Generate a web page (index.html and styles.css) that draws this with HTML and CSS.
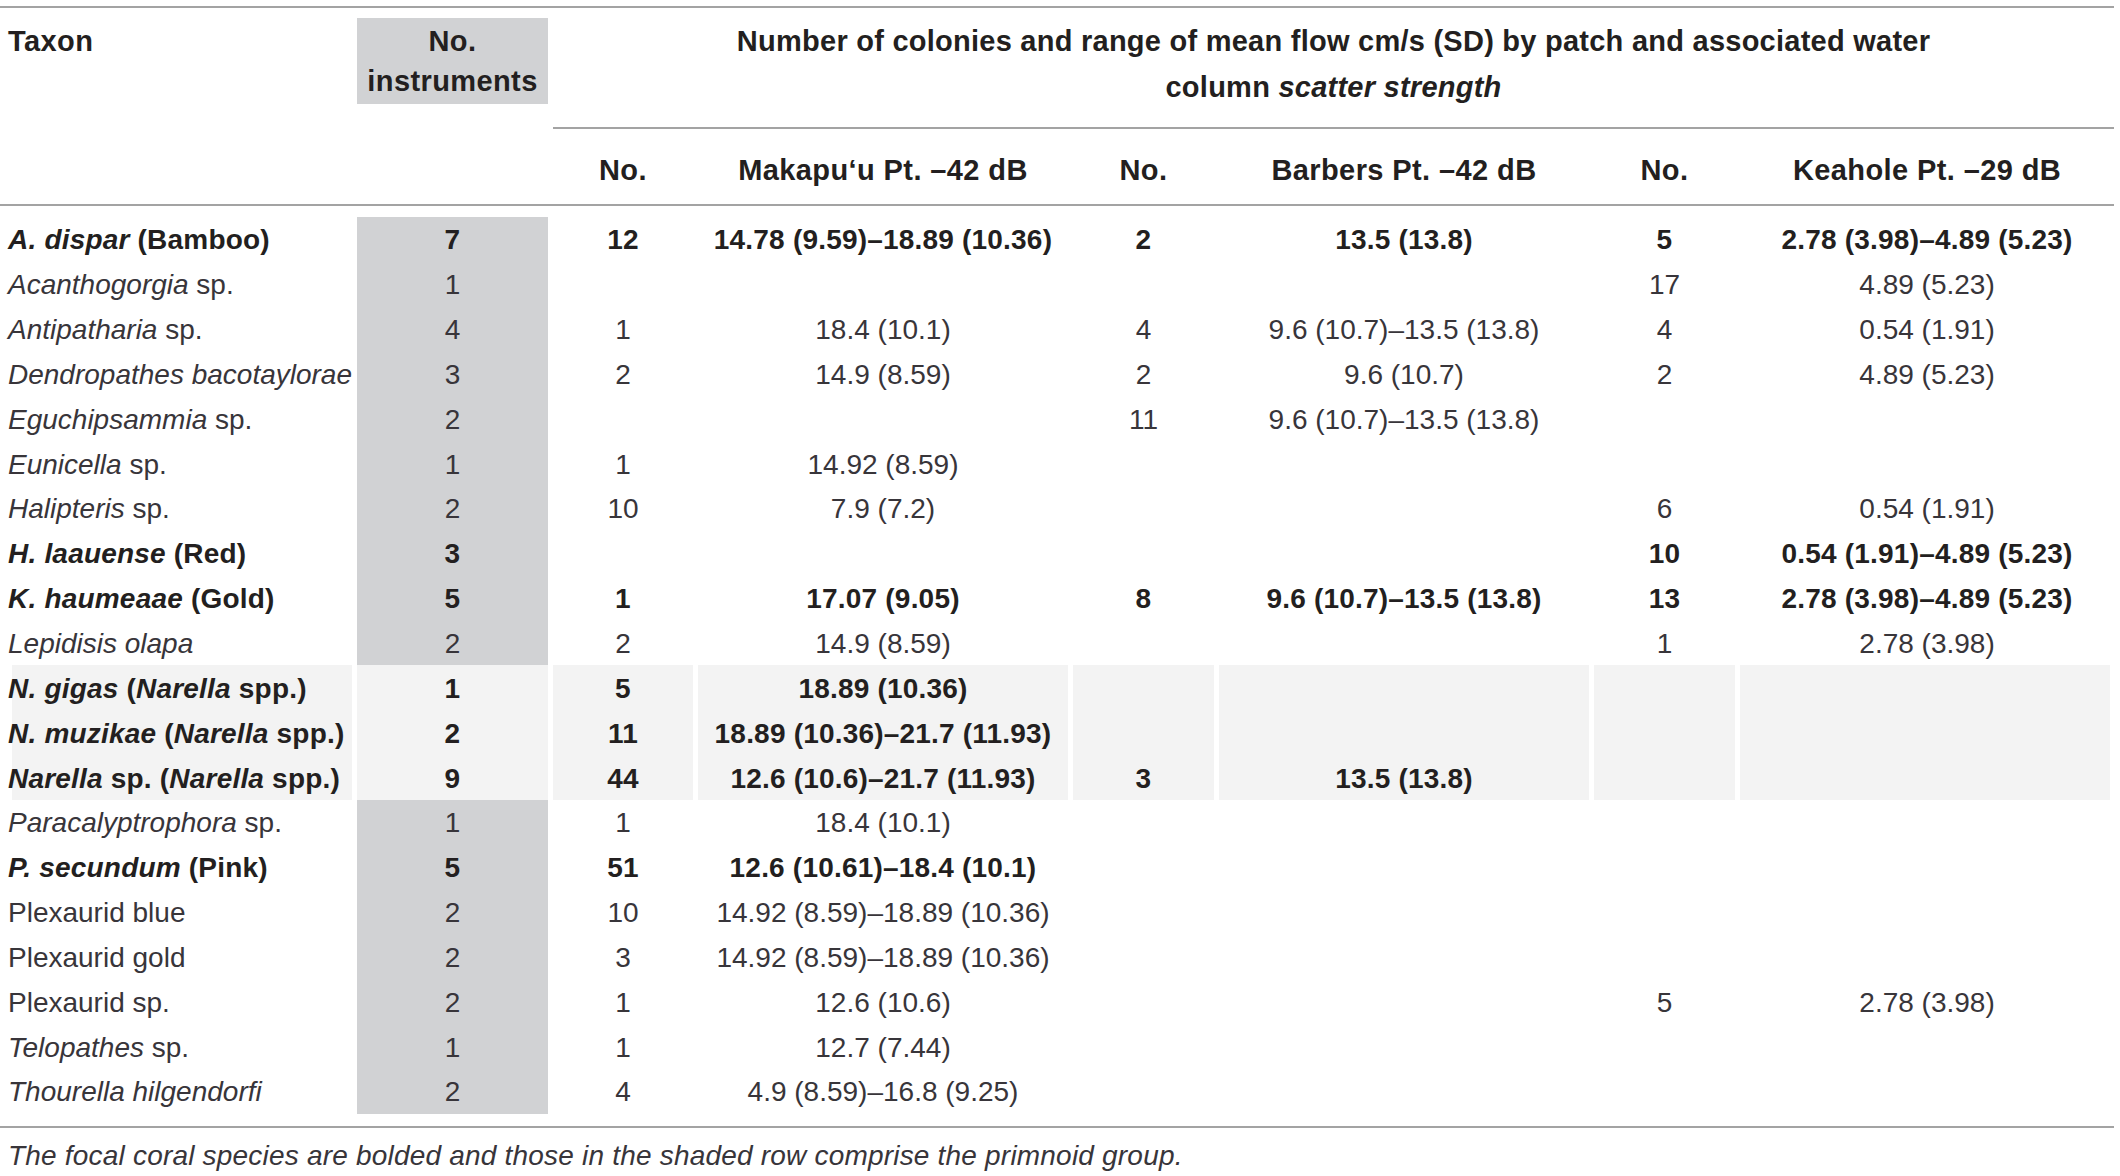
FILE: index.html
```html
<!DOCTYPE html>
<html lang="en">
<head>
	<meta charset="UTF-8">
	<title>Colonies and mean flow by patch</title>
	<link rel="stylesheet" href="styles.css">
</head>
<body>
	<table class="flow">
		<colgroup>
			<col class="c-taxon"><col class="c-inst"><col class="c-no1"><col class="c-site"><col class="c-no"><col class="c-site"><col class="c-no"><col class="c-last">
		</colgroup>
		<thead>
			<tr class="head-top">
				<th class="taxon-h" rowspan="2">Taxon</th>
				<th class="inst-h" rowspan="2"><div class="inst-box">No.<br>instruments</div></th>
				<th class="span-h" colspan="6"><div class="span-title">Number of colonies and range of mean flow cm/s (SD) by patch and associated water<br>column <i>scatter strength</i></div></th>
			</tr>
			<tr class="head-sub">
				<th>No.</th><th>Makapu‘u Pt. –42 dB</th>
				<th>No.</th><th>Barbers Pt. –42 dB</th>
				<th>No.</th><th>Keahole Pt. –29 dB</th>
			</tr>
		</thead>
		<tbody>
			<tr class="gap"><td colspan="8"></td></tr>
			<tr class="focal"><td><i>A. dispar</i> (Bamboo)</td><td class="inst">7</td><td>12</td><td>14.78 (9.59)–18.89 (10.36)</td><td>2</td><td>13.5 (13.8)</td><td>5</td><td>2.78 (3.98)–4.89 (5.23)</td></tr>
			<tr><td><i>Acanthogorgia</i> sp.</td><td class="inst">1</td><td></td><td></td><td></td><td></td><td>17</td><td>4.89 (5.23)</td></tr>
			<tr><td><i>Antipatharia</i> sp.</td><td class="inst">4</td><td>1</td><td>18.4 (10.1)</td><td>4</td><td>9.6 (10.7)–13.5 (13.8)</td><td>4</td><td>0.54 (1.91)</td></tr>
			<tr><td><i>Dendropathes bacotaylorae</i></td><td class="inst">3</td><td>2</td><td>14.9 (8.59)</td><td>2</td><td>9.6 (10.7)</td><td>2</td><td>4.89 (5.23)</td></tr>
			<tr><td><i>Eguchipsammia</i> sp.</td><td class="inst">2</td><td></td><td></td><td>11</td><td>9.6 (10.7)–13.5 (13.8)</td><td></td><td></td></tr>
			<tr><td><i>Eunicella</i> sp.</td><td class="inst">1</td><td>1</td><td>14.92 (8.59)</td><td></td><td></td><td></td><td></td></tr>
			<tr><td><i>Halipteris</i> sp.</td><td class="inst">2</td><td>10</td><td>7.9 (7.2)</td><td></td><td></td><td>6</td><td>0.54 (1.91)</td></tr>
			<tr class="focal"><td><i>H. laauense</i> (Red)</td><td class="inst">3</td><td></td><td></td><td></td><td></td><td>10</td><td>0.54 (1.91)–4.89 (5.23)</td></tr>
			<tr class="focal"><td><i>K. haumeaae</i> (Gold)</td><td class="inst">5</td><td>1</td><td>17.07 (9.05)</td><td>8</td><td>9.6 (10.7)–13.5 (13.8)</td><td>13</td><td>2.78 (3.98)–4.89 (5.23)</td></tr>
			<tr><td><i>Lepidisis olapa</i></td><td class="inst">2</td><td>2</td><td>14.9 (8.59)</td><td></td><td></td><td>1</td><td>2.78 (3.98)</td></tr>
			<tr class="focal primnoid"><td><i>N. gigas</i> (<i>Narella</i> spp.)</td><td class="inst">1</td><td>5</td><td>18.89 (10.36)</td><td></td><td></td><td></td><td></td></tr>
			<tr class="focal primnoid"><td><i>N. muzikae</i> (<i>Narella</i> spp.)</td><td class="inst">2</td><td>11</td><td>18.89 (10.36)–21.7 (11.93)</td><td></td><td></td><td></td><td></td></tr>
			<tr class="focal primnoid"><td><i>Narella</i> sp. (<i>Narella</i> spp.)</td><td class="inst">9</td><td>44</td><td>12.6 (10.6)–21.7 (11.93)</td><td>3</td><td>13.5 (13.8)</td><td></td><td></td></tr>
			<tr><td><i>Paracalyptrophora</i> sp.</td><td class="inst">1</td><td>1</td><td>18.4 (10.1)</td><td></td><td></td><td></td><td></td></tr>
			<tr class="focal"><td><i>P. secundum</i> (Pink)</td><td class="inst">5</td><td>51</td><td>12.6 (10.61)–18.4 (10.1)</td><td></td><td></td><td></td><td></td></tr>
			<tr><td>Plexaurid blue</td><td class="inst">2</td><td>10</td><td>14.92 (8.59)–18.89 (10.36)</td><td></td><td></td><td></td><td></td></tr>
			<tr><td>Plexaurid gold</td><td class="inst">2</td><td>3</td><td>14.92 (8.59)–18.89 (10.36)</td><td></td><td></td><td></td><td></td></tr>
			<tr><td>Plexaurid sp.</td><td class="inst">2</td><td>1</td><td>12.6 (10.6)</td><td></td><td></td><td>5</td><td>2.78 (3.98)</td></tr>
			<tr><td><i>Telopathes</i> sp.</td><td class="inst">1</td><td>1</td><td>12.7 (7.44)</td><td></td><td></td><td></td><td></td></tr>
			<tr><td><i>Thourella hilgendorfi</i></td><td class="inst">2</td><td>4</td><td>4.9 (8.59)–16.8 (9.25)</td><td></td><td></td><td></td><td></td></tr>
			<tr class="gap gap-end"><td colspan="8"></td></tr>
		</tbody>
	</table>
	<p class="note"><i>The focal coral species are bolded and those in the shaded row comprise the primnoid group.</i></p>
</body>
</html>
```

FILE: styles.css
```css
body {
	margin: 0;
	padding-top: 6px;
	background: #fff;
	color: #231f20;
	font-family: "Liberation Sans", Arial, sans-serif;
	font-size: 28px;
}
.flow {
	width: 2114px;
	table-layout: fixed;
	border-collapse: separate;
	border-spacing: 0;
	border-top: 2px solid #a3a3a3;
	border-bottom: 2px solid #a3a3a3;
}
.c-taxon { width: 352px; }
.c-inst { width: 196px; }
.c-no1 { width: 145px; }
.c-site { width: 375px; }
.c-no { width: 146px; }
.c-last { width: 379px; }

th {
	font-weight: bold;
	font-size: 29px;
	letter-spacing: 0.4px;
	padding: 0;
}
.head-top th {
	vertical-align: top;
}
.taxon-h {
	text-align: left;
	padding: 13px 0 0 8px;
	line-height: 40px;
	border-bottom: 2px solid #a3a3a3;
}
.inst-h {
	border-bottom: 2px solid #a3a3a3;
}
.inst-box {
	margin: 10px 0 0 5px;
	padding: 3px 0;
	line-height: 40px;
	background: #d1d2d4;
}
.span-title {
	margin-left: 5px;
	padding: 10px 0 17px;
	line-height: 46px;
	letter-spacing: 0.25px;
	border-bottom: 2px solid #a3a3a3;
}
.head-sub th {
	padding: 19px 0 11px 5px;
	line-height: 45px;
	border-bottom: 2px solid #a3a3a3;
}

td {
	height: 43.85px;
	padding: 1px 0 0 5px;
	line-height: 43px;
	text-align: center;
	white-space: nowrap;
	color: #38353a;
}
td:first-child {
	text-align: left;
	padding-left: 8px;
}
.gap td {
	height: 11px;
	padding: 0;
	line-height: 11px;
}
.gap-end td {
	height: 12px;
}
.inst {
	background: #d1d2d4;
	box-shadow: inset 5px 0 0 #fff;
}
.focal td {
	font-weight: bold;
	letter-spacing: 0.2px;
	color: #231f20;
}
.primnoid td {
	background: #f3f3f3;
	box-shadow: inset 5px 0 0 #fff;
}
.primnoid td:first-child {
	box-shadow: inset 12px 0 0 #fff;
}
.primnoid td:last-child {
	box-shadow: inset 5px 0 0 #fff, inset -4px 0 0 #fff;
}

.note {
	margin: 8px 0 0;
	padding-left: 8px;
	line-height: 40px;
	letter-spacing: 0.2px;
	color: #38353a;
}
```
